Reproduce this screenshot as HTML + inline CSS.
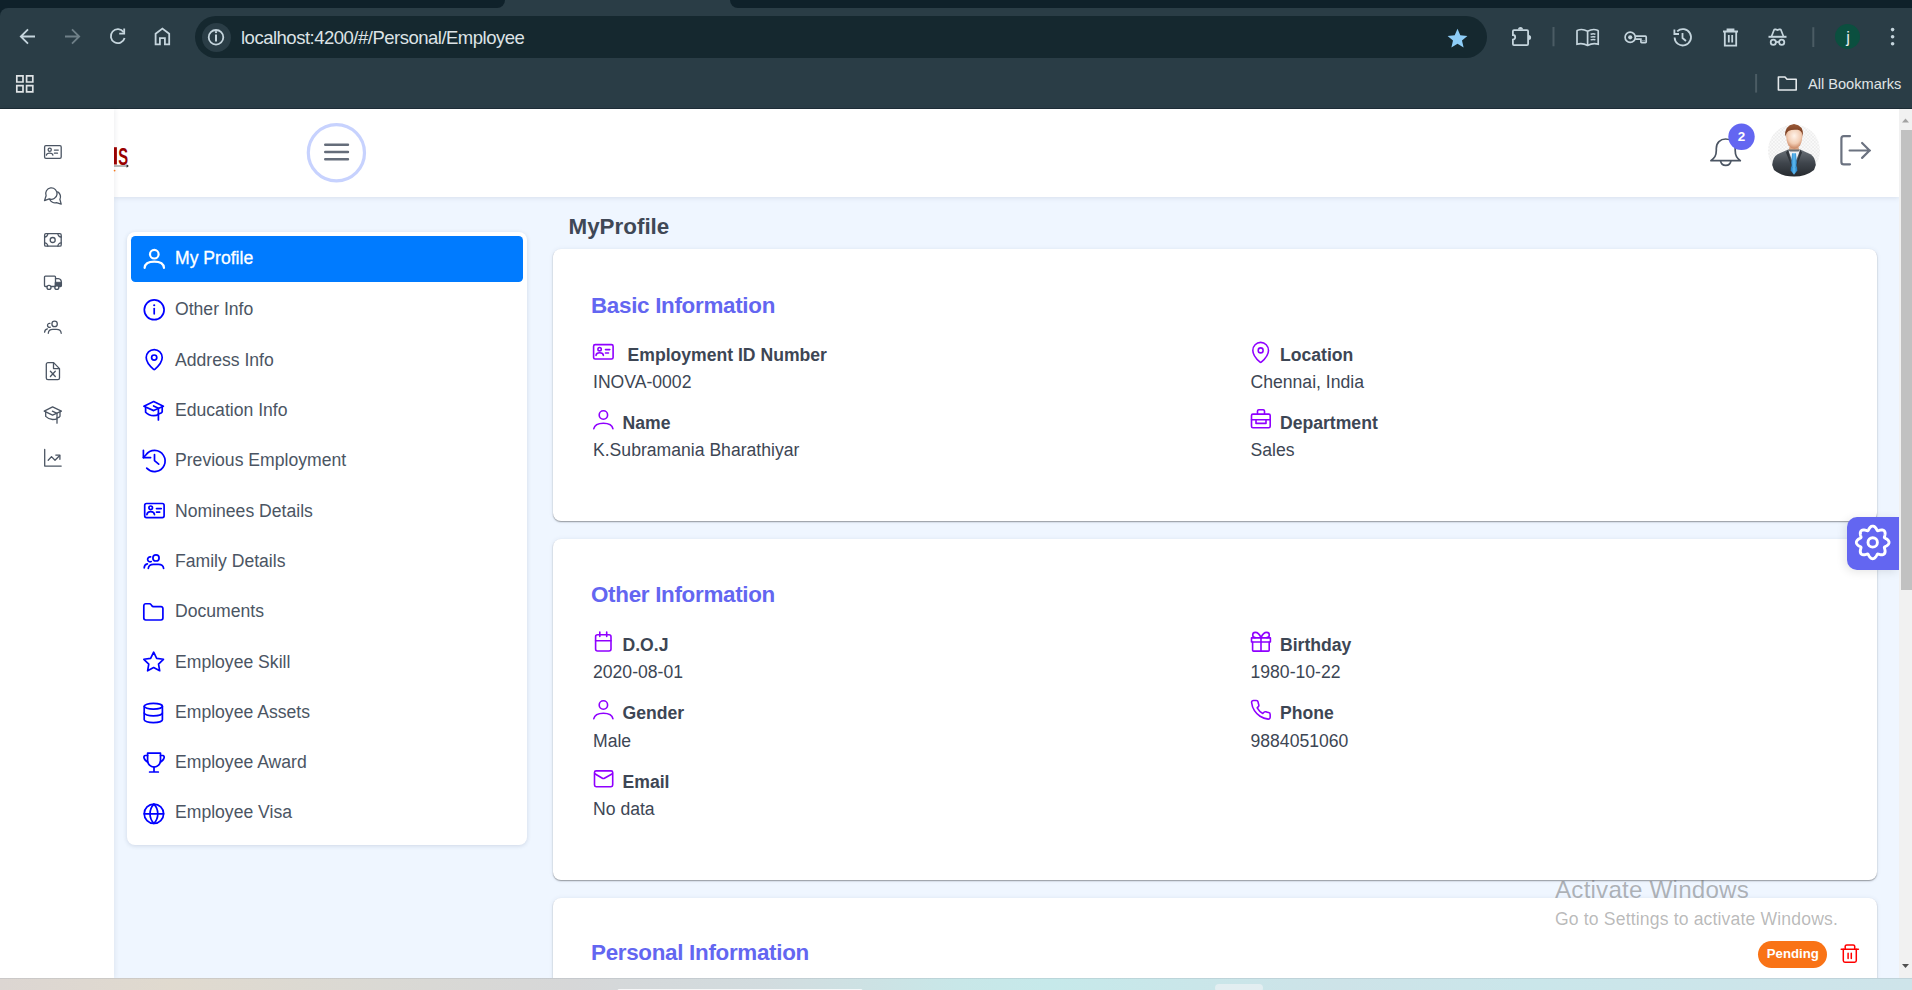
<!DOCTYPE html>
<html><head><meta charset="utf-8">
<style>
*{box-sizing:border-box;margin:0;padding:0}
html,body{width:1912px;height:990px;overflow:hidden;background:#0f212a;font-family:"Liberation Sans",sans-serif}
.a{position:absolute}
.t{position:absolute;white-space:nowrap;line-height:1}
svg{position:absolute;overflow:visible}
#toolbar{left:0;top:8px;width:1912px;height:101px;background:#2a3d46;border-top-left-radius:8px}
#tabs{left:0;top:0;width:1912px;height:8px;background:#0f212a}
#omni{left:195px;top:16px;width:1292px;height:42px;background:#15282f;border-radius:21px}
#infoc{left:202px;top:23px;width:29px;height:29px;border-radius:50%;background:#2a3d46}
.card{position:absolute;background:#fff;border-radius:8px;box-shadow:0 1px 1.5px rgba(0,0,0,.38),0 0 5px rgba(40,70,130,.07)}
</style></head><body>
<div id="tabs" class="a"></div>
<div class="a" style="left:497px;top:0;width:241px;height:8px;background:#2a3d46"></div>
<div class="a" style="left:0;top:0;width:505px;height:8px;background:#0f212a;border-bottom-right-radius:8px"></div>
<div class="a" style="left:730px;top:0;width:1182px;height:8px;background:#0f212a;border-bottom-left-radius:8px"></div>
<div id="toolbar" class="a"></div>
<div id="omni" class="a"></div>
<div id="infoc" class="a"></div>
<div class="t" style="left:241px;top:29px;font-size:18.5px;letter-spacing:-0.5px;color:#dde3e6">localhost:4200/#/Personal/Employee</div>
<svg style="left:0;top:0" width="1912" height="108" fill="none" stroke="#c5d5dd" stroke-width="1.8" stroke-linecap="butt" stroke-linejoin="miter">
  <!-- back -->
  <path d="M35 36.5H21M28 29.3L20.8 36.5L28 43.7"/>
  <!-- forward -->
  <path d="M65 36.5H79M72 29.3L79.2 36.5L72 43.7" stroke="#6f8088"/>
  <!-- reload -->
  <path d="M123.6 32.2A7 7 0 1 0 124.6 38"/>
  <path d="M124.2 28.6V33.6H119.2"/>
  <!-- home -->
  <path d="M155.6 44.4V33.8L162.4 28.6L169.2 33.8V44.4H164.9V38.2H159.9V44.4Z"/>
  <!-- info -->
  <circle cx="216" cy="37.3" r="7.3"/>
  <path d="M216 34.5V41.5" stroke-width="2"/>
  <circle cx="216" cy="32.2" r="1.1" fill="#c5d5dd" stroke="none"/>
  <!-- star -->
  <path d="M1457.5 28.8L1460.3 35.3L1467.4 35.9L1462 40.6L1463.6 47.5L1457.5 43.8L1451.4 47.5L1453 40.6L1447.6 35.9L1454.7 35.3Z" fill="#8ecdf7" stroke="none"/>
  <!-- puzzle -->
  <path d="M1514 30.1H1527Q1528.1 30.1 1528.1 31.2V44Q1528.1 45.1 1527 45.1H1514Q1512.9 45.1 1512.9 44V39.6A2.3 2.3 0 0 0 1512.9 35V31.2Q1512.9 30.1 1514 30.1Z"/>
  <path d="M1518 29.4A2.5 2.5 0 0 1 1523 29.4Z M1528.6 34.9A2.5 2.5 0 0 1 1528.6 39.9Z" fill="#c5d5dd" stroke="none"/>
  <!-- separator -->
  <path d="M1553.5 27V46.3" stroke="#4b5c64" stroke-width="2"/>
  <!-- reading list -->
  <path d="M1587.6 31.2Q1582.5 28.4 1577.6 30.2Q1577 30.4 1577 31V44.2Q1582.3 42.6 1587.6 45.4Q1592.9 42.6 1598.2 44.2V31Q1598.2 30.4 1597.6 30.2Q1592.7 28.4 1587.6 31.2ZM1587.6 31.2V45" stroke-width="1.7"/>
  <path d="M1590.6 34.3Q1593.2 33.5 1595.4 34.2M1590.6 37.1Q1593.2 36.3 1595.4 37M1590.6 39.9Q1593.2 39.1 1595.4 39.8" stroke-width="1.5"/>
  <!-- key -->
  <circle cx="1630.2" cy="37.3" r="5.1" stroke-width="1.7"/>
  <circle cx="1630.2" cy="37.3" r="2.1" fill="#c5d5dd" stroke="none"/>
  <path d="M1635.3 36.1H1645.4Q1646.2 36.1 1646.2 36.9V42Q1646.2 42.6 1645.5 42.6H1641.6Q1640.9 42.6 1640.9 42V39.2H1635.3" stroke-width="1.7"/>
  <path d="M1642.8 40.2V41.2M1644.2 40.2V41.2" stroke-width="0.9"/>
  <!-- history -->
  <path d="M1674.6 37.5A8.2 8.2 0 1 0 1677.2 31.3"/>
  <path d="M1674.4 29.4V34H1679"/>
  <path d="M1682.5 33V38L1686 41"/>
  <!-- trash -->
  <path d="M1723 31.5H1738M1727.5 31.5V29.5H1733.5V31.5M1724.8 31.5V45.6H1736.2V31.5M1728.8 35V42.5M1732.2 35V42.5"/>
  <!-- incognito -->
  <path d="M1768.5 36.8H1786.5" stroke-width="2"/>
  <path d="M1771.6 36.3L1773.9 30.2Q1774.4 29 1775.6 29.4L1777.5 30.1L1779.4 29.4Q1780.6 29 1781.1 30.2L1783.4 36.3" stroke-width="1.7"/>
  <circle cx="1773.3" cy="42.3" r="2.6"/>
  <circle cx="1781.7" cy="42.3" r="2.6"/>
  <path d="M1775.9 42H1779.1"/>
  <!-- separator -->
  <path d="M1813.3 27.2V47" stroke="#4b5c64" stroke-width="2"/>
  <!-- avatar -->
  <circle cx="1847.5" cy="36.5" r="12.5" fill="#0b4f3f" stroke="none"/>
  <!-- kebab -->
  <circle cx="1892.6" cy="29.6" r="1.8" fill="#c5d5dd" stroke="none"/>
  <circle cx="1892.6" cy="36.7" r="1.8" fill="#c5d5dd" stroke="none"/>
  <circle cx="1892.6" cy="43.7" r="1.8" fill="#c5d5dd" stroke="none"/>
  <!-- apps grid -->
  <path d="M16.8 75.8h6.2v6.2h-6.2zM26.6 75.8h6.2v6.2h-6.2zM16.8 85.6h6.2v6.2h-6.2zM26.6 85.6h6.2v6.2h-6.2z" stroke-width="1.7" stroke="#dfe3e5"/>
  <!-- bookmarks separator -->
  <path d="M1756.1 74V92.6" stroke="#4b5c64" stroke-width="2"/>
  <!-- folder -->
  <path d="M1778.4 77H1785L1787 79.2H1796.2V90H1778.4Z" stroke="#e4e9eb" stroke-width="1.6" stroke-linejoin="round"/>
</svg>
<div class="t" style="left:1846.3px;top:28.5px;font-size:16.5px;color:#e8ecec">j</div>
<div class="t" style="left:1808px;top:77px;font-size:14.6px;color:#e0e5e7">All Bookmarks</div>
<div class="a" style="left:0;top:108px;width:1912px;height:1px;background:#1c2c34"></div>

<div class="a" style="left:0;top:109px;width:1912px;height:869px;background:#eff6ff"></div>
<div class="a" style="left:114px;top:109px;width:1785px;height:88px;background:#fff;box-shadow:0 1px 5px rgba(60,80,110,.13)"></div>
<div class="a" style="left:127px;top:232px;width:400px;height:613px;background:#fff;border-radius:8px;box-shadow:0 1px 4px rgba(40,60,100,.16)"></div>
<div class="a" style="left:131px;top:236px;width:392px;height:46px;background:#007bff;border-radius:4.4px"></div>
<div class="t" style="left:175px;top:250.00px;font-size:17.6px;color:#fff;-webkit-text-stroke:0.3px #fff">My Profile</div>
<div class="t" style="left:175px;top:301.40px;font-size:17.6px;color:#4b5563">Other Info</div>
<div class="t" style="left:175px;top:351.70px;font-size:17.6px;color:#4b5563">Address Info</div>
<div class="t" style="left:175px;top:402.00px;font-size:17.6px;color:#4b5563">Education Info</div>
<div class="t" style="left:175px;top:452.30px;font-size:17.6px;color:#4b5563">Previous Employment</div>
<div class="t" style="left:175px;top:502.60px;font-size:17.6px;color:#4b5563">Nominees Details</div>
<div class="t" style="left:175px;top:552.90px;font-size:17.6px;color:#4b5563">Family Details</div>
<div class="t" style="left:175px;top:603.20px;font-size:17.6px;color:#4b5563">Documents</div>
<div class="t" style="left:175px;top:653.50px;font-size:17.6px;color:#4b5563">Employee Skill</div>
<div class="t" style="left:175px;top:703.80px;font-size:17.6px;color:#4b5563">Employee Assets</div>
<div class="t" style="left:175px;top:754.10px;font-size:17.6px;color:#4b5563">Employee Award</div>
<div class="t" style="left:175px;top:804.40px;font-size:17.6px;color:#4b5563">Employee Visa</div>
<div class="t" style="left:568.5px;top:216.04px;font-size:22.4px;font-weight:700;color:#3f4856">MyProfile</div>
<div class="card" style="left:553px;top:249px;width:1324px;height:272px"></div>
<div class="card" style="left:553px;top:539px;width:1324px;height:341px"></div>
<div class="card" style="left:553px;top:898px;width:1324px;height:200px"></div>
<div class="t" style="left:591px;top:295.04px;font-size:22.4px;font-weight:700;color:#6366f1;letter-spacing:-0.3px">Basic Information</div>
<div class="t" style="left:627.5px;top:347.00px;font-size:17.6px;font-weight:700;color:#3d4654">Employment ID Number</div>
<div class="t" style="left:593px;top:374.00px;font-size:17.6px;color:#3d4654">INOVA-0002</div>
<div class="t" style="left:622.5px;top:415.20px;font-size:17.6px;font-weight:700;color:#3d4654">Name</div>
<div class="t" style="left:593px;top:441.60px;font-size:17.6px;color:#3d4654">K.Subramania Bharathiyar</div>
<div class="t" style="left:1280px;top:347.30px;font-size:17.6px;font-weight:700;color:#3d4654">Location</div>
<div class="t" style="left:1250.5px;top:374.00px;font-size:17.6px;color:#3d4654">Chennai, India</div>
<div class="t" style="left:1280px;top:415.20px;font-size:17.6px;font-weight:700;color:#3d4654">Department</div>
<div class="t" style="left:1250.5px;top:441.90px;font-size:17.6px;color:#3d4654">Sales</div>
<div class="t" style="left:591px;top:584.24px;font-size:22.4px;font-weight:700;color:#6366f1;letter-spacing:-0.3px">Other Information</div>
<div class="t" style="left:622.5px;top:636.80px;font-size:17.6px;font-weight:700;color:#3d4654">D.O.J</div>
<div class="t" style="left:593px;top:664.10px;font-size:17.6px;color:#3d4654">2020-08-01</div>
<div class="t" style="left:622.5px;top:705.10px;font-size:17.6px;font-weight:700;color:#3d4654">Gender</div>
<div class="t" style="left:593px;top:732.80px;font-size:17.6px;color:#3d4654">Male</div>
<div class="t" style="left:622.5px;top:774.40px;font-size:17.6px;font-weight:700;color:#3d4654">Email</div>
<div class="t" style="left:593px;top:801.10px;font-size:17.6px;color:#3d4654">No data</div>
<div class="t" style="left:1280px;top:636.80px;font-size:17.6px;font-weight:700;color:#3d4654">Birthday</div>
<div class="t" style="left:1250.5px;top:663.70px;font-size:17.6px;color:#3d4654">1980-10-22</div>
<div class="t" style="left:1280px;top:704.70px;font-size:17.6px;font-weight:700;color:#3d4654">Phone</div>
<div class="t" style="left:1250.5px;top:732.70px;font-size:17.6px;color:#3d4654">9884051060</div>
<div class="t" style="left:591px;top:942.24px;font-size:22.4px;font-weight:700;color:#6366f1;letter-spacing:-0.3px">Personal Information</div>
<div class="a" style="left:1758px;top:941px;width:69px;height:26.7px;background:#f97316;border-radius:13.4px"></div>
<div class="t" style="left:1766.8px;top:946.93px;font-size:13.2px;color:#fff;font-weight:700">Pending</div>
<div class="a" style="left:1847px;top:517px;width:52px;height:53px;background:#6366f1;border-radius:10px 0 0 10px;box-shadow:-2px 2px 10px rgba(0,0,0,.10)"></div>
<div class="a" style="left:0;top:109px;width:114px;height:869px;background:#fff;box-shadow:1px 0 5px rgba(30,40,60,.08)"></div>
<div class="a" style="left:1899px;top:109px;width:13px;height:869px;background:#f1f1f1"></div>
<div class="a" style="left:1901px;top:130px;width:11px;height:460px;background:#c1c1c1"></div>
<div class="t" style="left:1555px;top:878.21px;font-size:24.2px;color:rgba(100,100,100,.47);letter-spacing:0.2px">Activate Windows</div>
<div class="t" style="left:1555px;top:911.30px;font-size:17.6px;color:rgba(100,100,100,.45);letter-spacing:0.15px">Go to Settings to activate Windows.</div>
<div class="a" style="left:0;top:978px;width:1912px;height:12px;background:linear-gradient(90deg,#dcd6d2 0%,#e0dacf 9%,#dad9d4 20%,#d6d7d8 30%,#d2dcdf 40%,#c8e7e8 50%,#c6e9ea 55%,#cde3e8 70%,#cae6ea 80%,#cee4ea 100%);border-top:1px solid rgba(150,160,170,.25)"></div>
<div class="a" style="left:1215px;top:984px;width:48px;height:8px;background:#e3eef1;border-radius:4px"></div>
<div class="a" style="left:617px;top:988.5px;width:246px;height:4px;border:1px solid rgba(255,255,255,.8);border-radius:4px"></div>
<svg style="left:0;top:0" width="1912" height="990"><g stroke="#0000ff" stroke-width="1.7" fill="none" stroke-linecap="round" stroke-linejoin="round"><path d="M154.3 254.2m-4.3 0a4.3 4.3 0 1 0 8.6 0a4.3 4.3 0 1 0 -8.6 0" stroke="#fff" stroke-width="2.2"/><path d="M144.6 267.8C145 263.3 149 261.6 154.3 261.6C159.6 261.6 163.6 263.3 164 267.8" stroke="#fff" stroke-width="2.2"/><circle cx="154.2" cy="309.8" r="9.9"/><path d="M154.2 308.6V313.8"/><path d="M154.2 305.3h.01" stroke-width="2.1"/><g transform="translate(142.2 347.6)"><path d="M20 10c0 4.993-5.539 10.193-7.399 11.799a1 1 0 0 1-1.202 0C9.539 20.193 4 14.993 4 10a8 8 0 0 1 16 0"/><circle cx="12" cy="10" r="2.6"/></g><path d="M143.9 406.2L153.7 401.6L163.4 406.2L153.7 410.6Z"/><path d="M153.6 405.9L158.4 408.3V420"/><path d="M145.6 407.6V412.3Q148.6 415.6 153.7 415.7Q156.6 415.7 158.4 414.6"/><path d="M162.2 407.6V411.8Q161.6 413.6 158.4 413.8"/><path d="M146.7 468.2A10.6 10.6 0 1 0 154.7 450.4A10.9 10.9 0 0 0 145.8 455L143.4 457.6"/><path d="M143.4 450.3V457.6H150.6"/><path d="M154.5 454.6V460.6L158.7 464.2"/><rect x="144.7" y="503.5" width="19.4" height="14.1" rx="1.8"/><circle cx="150.7" cy="507.8" r="1.8"/><path d="M146.9 514.6Q147.3 511.6 150.7 511.6Q154.1 511.6 154.5 514.6"/><path d="M156.5 508.6H161.2M156.5 512.1H159.7"/><circle cx="156" cy="557.9" r="3.1"/><path d="M148.3 568.4C148.6 565.8 150.5 564.4 153.5 564.4H158.5C161.5 564.4 163.3 565.8 163.6 568.4"/><path d="M150.6 556.9A2.5 2.5 0 1 0 151.2 561.6"/><path d="M144.2 567.9C144.3 565.7 145.2 564.2 147.4 563.8"/><g transform="translate(141.9 600.9) scale(0.955)"><path d="M20 20a2 2 0 0 0 2-2V8a2 2 0 0 0-2-2h-7.9a2 2 0 0 1-1.69-.9L9.6 3.9A2 2 0 0 0 7.93 3H4a2 2 0 0 0-2 2v13a2 2 0 0 0 2 2Z" stroke-width="1.78"/></g><g transform="translate(141.9 650.2) scale(0.98)"><path d="M12 17.75l-6.172 3.245l1.179 -6.873l-5 -4.867l6.9 -1l3.086 -6.253l3.086 6.253l6.9 1l-5 4.867l1.179 6.873z" stroke-width="1.73"/></g><g transform="translate(141.3 701.5) scale(1.0 0.96)"><ellipse cx="12" cy="5" rx="9.1" ry="3"/><path d="M2.9 5V19A9.1 3 0 0 0 21.1 19V5"/><path d="M2.9 12A9.1 3 0 0 0 21.1 12"/></g><path d="M147.6 753.2H160.5V760.6A6.45 6.45 0 0 1 147.6 760.6Z"/><path d="M147.6 755.5H145.2A1.6 1.6 0 0 0 143.9 757.4Q144.3 760.2 147.8 762.2"/><path d="M160.5 755.5H162.9A1.6 1.6 0 0 1 164.2 757.4Q163.8 760.2 160.3 762.2"/><path d="M154 767V771.6M149.6 772H158.3"/><circle cx="153.9" cy="813.8" r="9.7"/><path d="M153.9 804.1a14 14 0 0 0 0 19.4a14 14 0 0 0 0-19.4"/><path d="M144.2 813.8H163.6"/></g><g stroke="#8f00ff" stroke-width="1.6" fill="none" stroke-linecap="round" stroke-linejoin="round"><rect x="593.6" y="344.6" width="19.5" height="14.4" rx="1.6"/><circle cx="599.6" cy="349.2" r="1.7"/><path d="M596 355.4Q596.3 352.8 599.7 352.8Q603.1 352.8 603.4 355.4"/><path d="M605.5 349.6H609.8M605.5 353H608.5"/><g transform="translate(0 0)"><circle cx="603.4" cy="415" r="4.2"/><path d="M593.8 428.6C594.6 424.8 598.5 423.2 603.4 423.2C608.3 423.2 612.2 424.8 612.9 428.6"/></g><g transform="translate(0 290)"><circle cx="603.4" cy="415" r="4.2"/><path d="M593.8 428.6C594.6 424.8 598.5 423.2 603.4 423.2C608.3 423.2 612.2 424.8 612.9 428.6"/></g><g transform="translate(1248.9 340.4) scale(0.98 1.0)"><path d="M20 10c0 4.993-5.539 10.193-7.399 11.799a1 1 0 0 1-1.202 0C9.539 20.193 4 14.993 4 10a8 8 0 0 1 16 0"/><circle cx="12" cy="10" r="2.5"/></g><rect x="1251.5" y="414.1" width="18.7" height="13.6" rx="1.4"/><path d="M1257.5 413.8V411A1.3 1.3 0 0 1 1258.8 409.8H1263.2A1.3 1.3 0 0 1 1264.5 411V413.8"/><path d="M1251.5 419.8H1270.2"/><path d="M1256 419.8V423.4H1266V419.8"/><rect x="595.6" y="634.7" width="15.4" height="16.3" rx="2"/><path d="M599.8 632V636.5M606.7 632V636.5M595.6 640.7H611"/><rect x="1251.5" y="637.9" width="18.9" height="4.1"/><path d="M1252.6 642V650.2A0.9 0.9 0 0 0 1253.5 651.1H1268.3A0.9 0.9 0 0 0 1269.2 650.2V642"/><path d="M1261 637.9V651.1"/><path d="M1261 637.6C1259.5 634 1257.2 632.4 1255.3 632.4A1.9 1.9 0 0 0 1255.3 637.6"/><path d="M1261 637.6C1262.5 634 1264.8 632.4 1266.7 632.4A1.9 1.9 0 0 1 1266.7 637.6"/><g transform="translate(1249.6 698.6) scale(0.935)"><path d="M22 16.92v3a2 2 0 0 1-2.18 2 19.79 19.79 0 0 1-8.63-3.07 19.5 19.5 0 0 1-6-6 19.79 19.79 0 0 1-3.07-8.67A2 2 0 0 1 4.11 2h3a2 2 0 0 1 2 1.72 12.84 12.84 0 0 0 .7 2.81 2 2 0 0 1-.45 2.11L8.09 9.91a16 16 0 0 0 6 6l1.27-1.27a2 2 0 0 1 2.11-.45 12.84 12.84 0 0 0 2.81.7A2 2 0 0 1 22 16.92z" stroke-width="1.7"/></g><rect x="594.5" y="770.9" width="18.2" height="15.8" rx="1.6"/><path d="M594.8 773.8L602.4 778.2Q603.4 778.8 604.4 778.2L612.4 773.8"/></g><g stroke="#4b5563" stroke-width="1.3" fill="none" stroke-linecap="round" stroke-linejoin="round"><rect x="44.6" y="145.6" width="16.6" height="12.7" rx="1.3"/><circle cx="49.7" cy="149.7" r="1.6"/><path d="M46.4 155.2Q46.7 153.2 49.7 153.2Q52.6 153.2 52.9 155.2"/><path d="M54.4 150.1H58.3M54.4 153.2H57.5"/><path d="M46.1 195.8A5.7 5.7 0 1 1 49.2 198.9L44.5 200.6Z"/><path d="M57.7 191.9A5.7 5.7 0 0 1 59.9 199.4L61.2 204.2L56.4 202.6A5.7 5.7 0 0 1 49.7 199.3"/><rect x="44.6" y="233.6" width="16.6" height="12.6" rx="1.3"/><circle cx="52.7" cy="240" r="2.5"/><path d="M44.6 237A3.2 3.2 0 0 0 47.8 233.6M57.9 233.6A3.2 3.2 0 0 0 61.2 237M61.2 242.9A3.2 3.2 0 0 0 57.9 246.2M47.8 246.2A3.2 3.2 0 0 0 44.6 242.9"/><path d="M47 286.5H45.4A0.9 0.9 0 0 1 44.5 285.6V277.1A0.9 0.9 0 0 1 45.4 276.2H54.6A0.9 0.9 0 0 1 55.5 277.1V286.5H51.1"/><path d="M55.5 278.6H58.3Q61.4 278.9 61.4 282.5V285.6Q61.4 286.5 60.5 286.5H58.8"/><circle cx="49" cy="287.4" r="2"/><circle cx="56.8" cy="287.4" r="2"/><path d="M55.6 282.3H61.2V286H55.6Z" fill="#4b5563" stroke-width="1"/><circle cx="54.6" cy="323.9" r="2.7"/><path d="M48.3 333.3C48.5 331 50 329.4 52.8 329.4H56.6C59.4 329.4 61 331 61.2 333.3"/><path d="M49.9 323.4A2 2 0 1 0 50.3 327.2"/><path d="M44.6 332.2C44.7 330.4 45.5 329.2 47.4 328.8"/><path d="M53.6 362.6H48A1.7 1.7 0 0 0 46.3 364.3V377.9A1.7 1.7 0 0 0 48 379.6H57.8A1.7 1.7 0 0 0 59.5 377.9V368.6Z"/><path d="M53.5 362.8V368.6H59.3"/><path d="M50.4 371.3L55.3 376.5M55.3 371.3L50.4 376.5"/><path d="M44.2 411.1L52.6 406.9L61.4 411.1L52.6 415.1Z"/><path d="M52.4 411.2L57 413.3V423.2"/><path d="M45.7 412V416.4Q48.6 419.4 52.6 419.5Q55.4 419.5 57 418.9"/><path d="M60 412V416.2Q59.4 417.6 57 417.8"/><path d="M44.7 449.5V466.1H61.2"/><path d="M48.2 460.3L51.5 456.6L55 460.2L59.5 455.7"/><path d="M55.8 455.1H59.9V459.3"/></g><path d="M114 147.2H116.9V164.5H114Z" fill="#990000"/><text x="118.3" y="164.6" font-family="Liberation Sans" font-weight="700" font-size="23.5" fill="#990000" transform="translate(118.3 164.6) scale(0.63 1) translate(-118.3 -164.6)">S</text><path d="M114 166H127" stroke="#9a9a9a" stroke-width="1.4"/><path d="M126.6 164.3L128.8 166L126.6 167.7Z" fill="#222"/><circle cx="114.6" cy="170.6" r="0.9" fill="#f47a20"/><circle cx="336.4" cy="152.7" r="28.1" fill="none" stroke="#c7d2fe" stroke-width="3.2"/><path d="M325.2 144.7H348M325.2 152H348M325.2 159.3H348" stroke="#656d7a" stroke-width="2.4" stroke-linecap="round"/><g fill="none" stroke="#4b5563" stroke-width="1.7" stroke-linecap="round" stroke-linejoin="round"><path d="M1710.9 160.7H1740.3C1737 158 1735.2 156 1735.2 150.5V148.5C1735.2 142.6 1731.2 139 1725.7 139C1720.2 139 1716.3 142.6 1716.3 148.5V150.5C1716.3 156 1714.4 158 1710.9 160.7Z"/><path d="M1720.6 160.9A5.2 5.2 0 0 0 1730.9 160.9"/></g><circle cx="1741.5" cy="136.8" r="13.2" fill="#6366f1"/><text x="1741.6" y="141.2" text-anchor="middle" font-family="Liberation Sans" font-weight="700" font-size="13.4" fill="#fff">2</text><g fill="none" stroke="#6b7280" stroke-width="2.2" stroke-linecap="round" stroke-linejoin="round"><path d="M1850 136.1H1843.8A2.4 2.4 0 0 0 1841.4 138.5V161.9A2.4 2.4 0 0 0 1843.8 164.3H1850"/><path d="M1849.6 150.5H1870M1862.1 143L1869.6 150.5L1862.1 157.9"/></g><defs><clipPath id="avc"><circle cx="1794" cy="150.5" r="26"/></clipPath>
<linearGradient id="suit" x1="0" y1="0" x2="0" y2="1"><stop offset="0" stop-color="#6a7178"/><stop offset="0.5" stop-color="#3f454c"/><stop offset="1" stop-color="#262a2f"/></linearGradient>
<radialGradient id="skin" cx="0.5" cy="0.35" r="0.65"><stop offset="0" stop-color="#fff3ea"/><stop offset="0.6" stop-color="#f2cdb4"/><stop offset="1" stop-color="#c8825e"/></radialGradient>
<linearGradient id="hair" x1="0" y1="0" x2="0" y2="1"><stop offset="0" stop-color="#9a5a38"/><stop offset="1" stop-color="#6e3318"/></linearGradient>
<linearGradient id="tie" x1="0" y1="0" x2="1" y2="0"><stop offset="0" stop-color="#1f7cc4"/><stop offset="0.5" stop-color="#5fbaf0"/><stop offset="1" stop-color="#1f7cc4"/></linearGradient>
<pattern id="chk" width="3.4" height="3.4" patternUnits="userSpaceOnUse"><rect width="3.4" height="3.4" fill="#fafafa"/><rect width="1.7" height="1.7" fill="#ededed"/><rect x="1.7" y="1.7" width="1.7" height="1.7" fill="#ededed"/></pattern></defs>
<g clip-path="url(#avc)"><rect x="1767" y="123" width="54" height="55" fill="url(#chk)"/></g>
<path d="M1790 145L1798 145L1799.5 151L1788.5 151Z" fill="#d9a585"/>
<path d="M1772.2 165Q1772.8 157 1777.5 154.3L1788.2 149.6L1800.2 149.6L1810.5 154.3Q1815.2 157 1815.8 165L1814 170Q1806 176.6 1794 176.6Q1782 176.6 1774 170Z" fill="url(#suit)"/>
<path d="M1788.2 149.8L1794 166L1800.2 149.8L1798.5 151.5H1789.8Z" fill="#eef0f2"/>
<path d="M1792 153.2H1796L1797.3 170.5L1794 174.8L1790.7 170.5Z" fill="url(#tie)"/>
<path d="M1788.2 149.8L1786 152.5L1792.4 168.5Z M1800.2 149.8L1802 152.5L1795.6 168.5Z" fill="#30353b"/>
<path d="M1786.1 131Q1785.8 141 1788.5 145.5Q1791.5 148.8 1794.3 148.8Q1797.1 148.8 1800 145.5Q1802.7 141 1802.5 131Q1794 127 1786.1 131Z" fill="url(#skin)"/>
<path d="M1785.2 136.5Q1784.2 125.5 1794 124Q1803.8 125 1803.1 136.5L1802.3 134Q1801.5 130.5 1797.5 129.8Q1792 129.2 1788.5 131Q1786.3 132.3 1785.9 135Z" fill="url(#hair)"/>
<path d="M1889.00 542.40 L1888.98 542.72 L1888.92 543.04 L1888.83 543.35 L1888.70 543.66 L1888.54 543.96 L1888.34 544.25 L1888.11 544.53 L1887.86 544.80 L1887.59 545.06 L1887.29 545.30 L1886.98 545.53 L1886.66 545.75 L1886.33 545.96 L1886.01 546.15 L1885.68 546.34 L1885.36 546.51 L1885.06 546.69 L1884.78 546.86 L1884.53 547.03 L1884.34 547.22 L1884.34 547.49 L1884.39 547.79 L1884.47 548.11 L1884.56 548.44 L1884.66 548.79 L1884.76 549.16 L1884.86 549.53 L1884.94 549.90 L1885.01 550.28 L1885.07 550.67 L1885.11 551.05 L1885.12 551.42 L1885.11 551.79 L1885.07 552.15 L1885.00 552.49 L1884.90 552.82 L1884.78 553.13 L1884.62 553.42 L1884.44 553.69 L1884.23 553.93 L1883.99 554.14 L1883.72 554.32 L1883.43 554.48 L1883.12 554.60 L1882.79 554.70 L1882.45 554.77 L1882.09 554.81 L1881.72 554.82 L1881.35 554.81 L1880.97 554.77 L1880.58 554.71 L1880.20 554.64 L1879.83 554.56 L1879.46 554.46 L1879.09 554.36 L1878.74 554.26 L1878.41 554.17 L1878.09 554.09 L1877.79 554.04 L1877.52 554.04 L1877.33 554.23 L1877.16 554.48 L1876.99 554.76 L1876.81 555.06 L1876.64 555.38 L1876.45 555.71 L1876.26 556.03 L1876.05 556.36 L1875.83 556.68 L1875.60 556.99 L1875.36 557.29 L1875.10 557.56 L1874.83 557.81 L1874.55 558.04 L1874.26 558.24 L1873.96 558.40 L1873.65 558.53 L1873.34 558.62 L1873.02 558.68 L1872.70 558.70 L1872.38 558.68 L1872.06 558.62 L1871.75 558.53 L1871.44 558.40 L1871.14 558.24 L1870.85 558.04 L1870.57 557.81 L1870.30 557.56 L1870.04 557.29 L1869.80 556.99 L1869.57 556.68 L1869.35 556.36 L1869.14 556.03 L1868.95 555.71 L1868.76 555.38 L1868.59 555.06 L1868.41 554.76 L1868.24 554.48 L1868.07 554.23 L1867.88 554.04 L1867.61 554.04 L1867.31 554.09 L1866.99 554.17 L1866.66 554.26 L1866.31 554.36 L1865.94 554.46 L1865.57 554.56 L1865.20 554.64 L1864.82 554.71 L1864.43 554.77 L1864.05 554.81 L1863.68 554.82 L1863.31 554.81 L1862.95 554.77 L1862.61 554.70 L1862.28 554.60 L1861.97 554.48 L1861.68 554.32 L1861.41 554.14 L1861.17 553.93 L1860.96 553.69 L1860.78 553.42 L1860.62 553.13 L1860.50 552.82 L1860.40 552.49 L1860.33 552.15 L1860.29 551.79 L1860.28 551.42 L1860.29 551.05 L1860.33 550.67 L1860.39 550.28 L1860.46 549.90 L1860.54 549.53 L1860.64 549.16 L1860.74 548.79 L1860.84 548.44 L1860.93 548.11 L1861.01 547.79 L1861.06 547.49 L1861.06 547.22 L1860.87 547.03 L1860.62 546.86 L1860.34 546.69 L1860.04 546.51 L1859.72 546.34 L1859.39 546.15 L1859.07 545.96 L1858.74 545.75 L1858.42 545.53 L1858.11 545.30 L1857.81 545.06 L1857.54 544.80 L1857.29 544.53 L1857.06 544.25 L1856.86 543.96 L1856.70 543.66 L1856.57 543.35 L1856.48 543.04 L1856.42 542.72 L1856.40 542.40 L1856.42 542.08 L1856.48 541.76 L1856.57 541.45 L1856.70 541.14 L1856.86 540.84 L1857.06 540.55 L1857.29 540.27 L1857.54 540.00 L1857.81 539.74 L1858.11 539.50 L1858.42 539.27 L1858.74 539.05 L1859.07 538.84 L1859.39 538.65 L1859.72 538.46 L1860.04 538.29 L1860.34 538.11 L1860.62 537.94 L1860.87 537.77 L1861.06 537.58 L1861.06 537.31 L1861.01 537.01 L1860.93 536.69 L1860.84 536.36 L1860.74 536.01 L1860.64 535.64 L1860.54 535.27 L1860.46 534.90 L1860.39 534.52 L1860.33 534.13 L1860.29 533.75 L1860.28 533.38 L1860.29 533.01 L1860.33 532.65 L1860.40 532.31 L1860.50 531.98 L1860.62 531.67 L1860.78 531.38 L1860.96 531.11 L1861.17 530.87 L1861.41 530.66 L1861.68 530.48 L1861.97 530.32 L1862.28 530.20 L1862.61 530.10 L1862.95 530.03 L1863.31 529.99 L1863.68 529.98 L1864.05 529.99 L1864.43 530.03 L1864.82 530.09 L1865.20 530.16 L1865.57 530.24 L1865.94 530.34 L1866.31 530.44 L1866.66 530.54 L1866.99 530.63 L1867.31 530.71 L1867.61 530.76 L1867.88 530.76 L1868.07 530.57 L1868.24 530.32 L1868.41 530.04 L1868.59 529.74 L1868.76 529.42 L1868.95 529.09 L1869.14 528.77 L1869.35 528.44 L1869.57 528.12 L1869.80 527.81 L1870.04 527.51 L1870.30 527.24 L1870.57 526.99 L1870.85 526.76 L1871.14 526.56 L1871.44 526.40 L1871.75 526.27 L1872.06 526.18 L1872.38 526.12 L1872.70 526.10 L1873.02 526.12 L1873.34 526.18 L1873.65 526.27 L1873.96 526.40 L1874.26 526.56 L1874.55 526.76 L1874.83 526.99 L1875.10 527.24 L1875.36 527.51 L1875.60 527.81 L1875.83 528.12 L1876.05 528.44 L1876.26 528.77 L1876.45 529.09 L1876.64 529.42 L1876.81 529.74 L1876.99 530.04 L1877.16 530.32 L1877.33 530.57 L1877.52 530.76 L1877.79 530.76 L1878.09 530.71 L1878.41 530.63 L1878.74 530.54 L1879.09 530.44 L1879.46 530.34 L1879.83 530.24 L1880.20 530.16 L1880.58 530.09 L1880.97 530.03 L1881.35 529.99 L1881.72 529.98 L1882.09 529.99 L1882.45 530.03 L1882.79 530.10 L1883.12 530.20 L1883.43 530.32 L1883.72 530.48 L1883.99 530.66 L1884.23 530.87 L1884.44 531.11 L1884.62 531.38 L1884.78 531.67 L1884.90 531.98 L1885.00 532.31 L1885.07 532.65 L1885.11 533.01 L1885.12 533.38 L1885.11 533.75 L1885.07 534.13 L1885.01 534.52 L1884.94 534.90 L1884.86 535.27 L1884.76 535.64 L1884.66 536.01 L1884.56 536.36 L1884.47 536.69 L1884.39 537.01 L1884.34 537.31 L1884.34 537.58 L1884.53 537.77 L1884.78 537.94 L1885.06 538.11 L1885.36 538.29 L1885.68 538.46 L1886.01 538.65 L1886.33 538.84 L1886.66 539.05 L1886.98 539.27 L1887.29 539.50 L1887.59 539.74 L1887.86 540.00 L1888.11 540.27 L1888.34 540.55 L1888.54 540.84 L1888.70 541.14 L1888.83 541.45 L1888.92 541.76 L1888.98 542.08 L1889.00 542.40Z" fill="none" stroke="#fff" stroke-width="2.9" stroke-linejoin="round"/><circle cx="1872.7" cy="542.4" r="4.7" fill="none" stroke="#fff" stroke-width="2.9"/><g fill="none" stroke="#ff0000" stroke-width="1.5" stroke-linecap="round" stroke-linejoin="round"><path d="M1841.2 949.2H1858.4"/><path d="M1845.2 949V946.2A1.5 1.5 0 0 1 1846.7 944.9H1853.2A1.5 1.5 0 0 1 1854.7 946.2V949"/><path d="M1843.3 949.3V960.6A1.6 1.6 0 0 0 1844.9 962.2H1854.7A1.6 1.6 0 0 0 1856.3 960.6V949.3"/><path d="M1848.1 953.2V958.4M1851.3 953.2V958.4"/></g><path d="M1902 122.5L1905.5 118.5L1909 122.5Z" fill="#a3a3a3"/><path d="M1902 964L1905.5 968L1909 964Z" fill="#505050"/></svg>
</body></html>
